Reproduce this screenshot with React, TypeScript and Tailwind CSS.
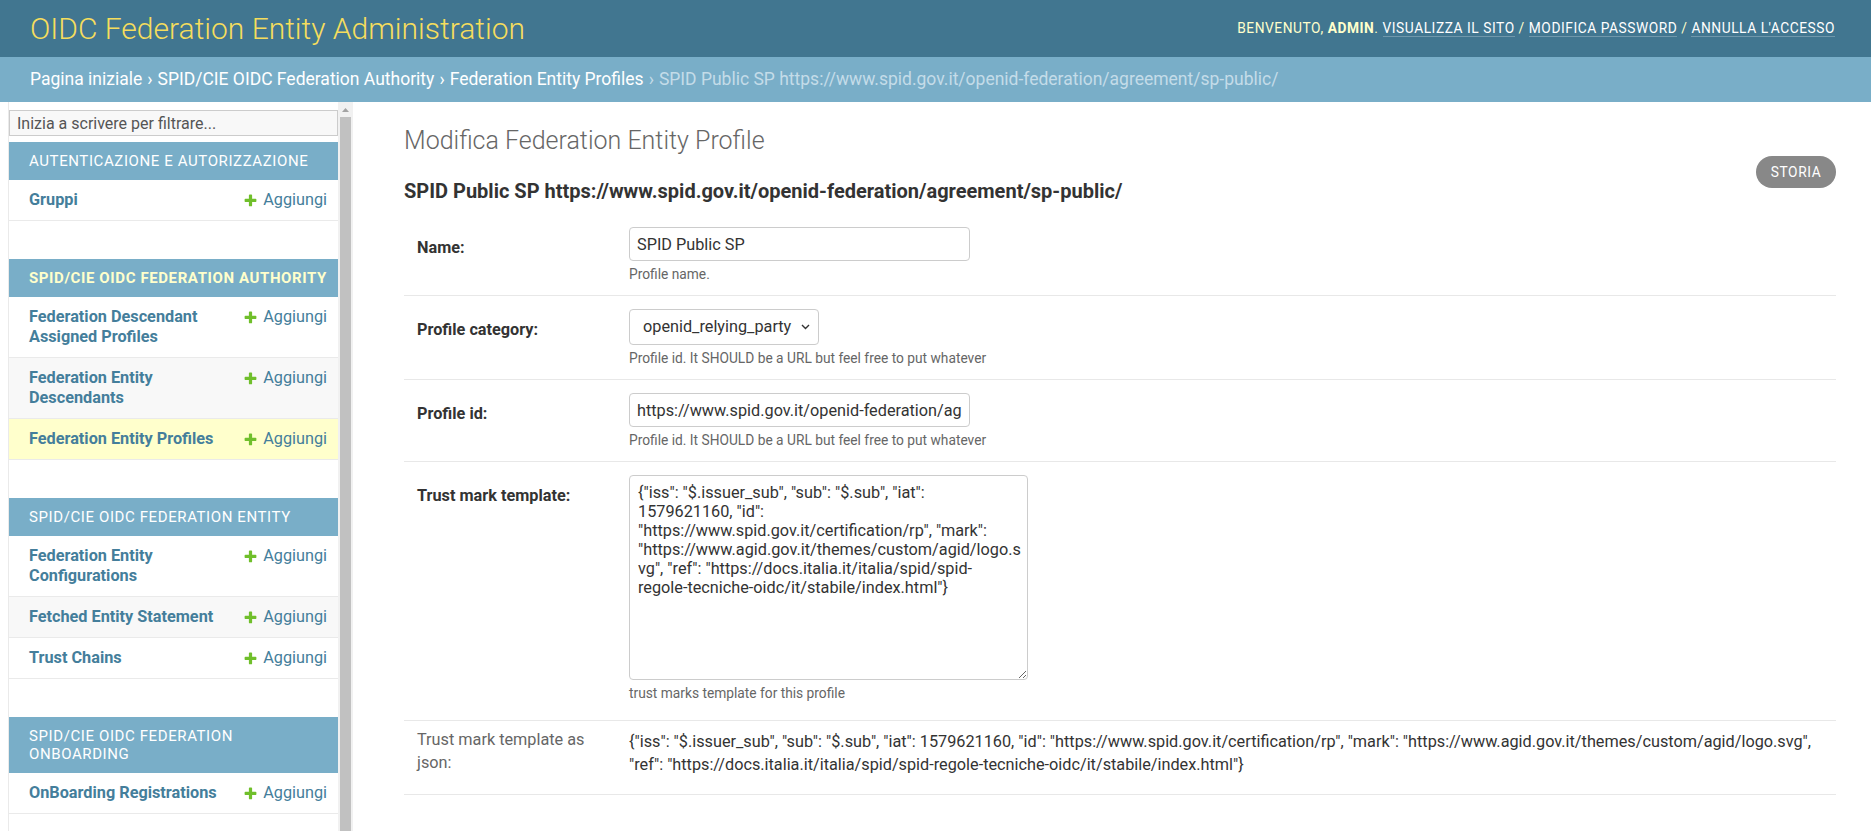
import React from "react"

const PlusIcon = () => (
  <svg width="15" height="15" viewBox="0 0 1792 1792" className="shrink-0">
    <path
      fill="#70bf2b"
      d="M1600 796v192q0 40-28 68t-68 28h-416v416q0 40-28 68t-68 28h-192q-40 0-68-28t-28-68v-416h-416q-40 0-68-28t-28-68v-192q0-40 28-68t68-28h416v-416q0-40 28-68t68-28h192q40 0 68 28t28 68v416h416q40 0 68 28t28 68z"
    />
  </svg>
)

type Model = { label: React.ReactNode; alt?: boolean; current?: boolean }
type Module = { title: React.ReactNode; current?: boolean; models: Model[] }

const modules: Module[] = [
  { title: "Autenticazione e autorizzazione", models: [{ label: "Gruppi" }] },
  {
    title: "SPID/CIE OIDC Federation Authority",
    current: true,
    models: [
      { label: <>Federation Descendant<br />Assigned Profiles</> },
      { label: <>Federation Entity<br />Descendants</>, alt: true },
      { label: "Federation Entity Profiles", current: true },
    ],
  },
  {
    title: "SPID/CIE OIDC Federation Entity",
    models: [
      { label: <>Federation Entity<br />Configurations</> },
      { label: "Fetched Entity Statement", alt: true },
      { label: "Trust Chains" },
    ],
  },
  {
    title: <>SPID/CIE OIDC Federation<br />Onboarding</>,
    models: [{ label: "OnBoarding Registrations" }],
  },
]

const template =
  '{"iss": "$.issuer_sub", "sub": "$.sub", "iat": 1579621160, "id": "https://www.spid.gov.it/certification/rp", "mark": "https://www.agid.gov.it/themes/custom/agid/logo.svg", "ref": "https://docs.italia.it/italia/spid/spid-regole-tecniche-oidc/it/stabile/index.html"}'

// textarea content, broken where the field wraps it
const templateLines = [
  '{"iss": "$.issuer_sub", "sub": "$.sub", "iat":',
  '1579621160, "id":',
  '"https://www.spid.gov.it/certification/rp", "mark":',
  '"https://www.agid.gov.it/themes/custom/agid/logo.s',
  'vg", "ref": "https://docs.italia.it/italia/spid/spid-',
  'regole-tecniche-oidc/it/stabile/index.html"}',
].join("\n")

function Sidebar() {
  return (
    <aside className="flex h-[729px] w-[353px] shrink-0 overflow-hidden">
      <div className="w-[9px] shrink-0 border-r border-[#eaeaea]" />
      <nav className="w-[329px] shrink-0">
        <input
          type="search"
          placeholder="Inizia a scrivere per filtrare..."
          className="mt-[8px] h-[26px] w-full border border-[#ccc] bg-[#f8f8f8] px-[7px] text-[16px] text-[#333] placeholder:text-[#555] outline-none"
        />
        <div className="mt-[6px]">
          {modules.map((m, i) => (
            <div key={i} className="mb-[38px]">
              <div
                className={`bg-[#79aec8] py-[10px] pl-[20px] pr-[8px] text-[15px] uppercase leading-[18px] tracking-[0.6px] whitespace-nowrap ${
                  m.current ? "font-bold text-[#ffc]" : "text-white"
                }`}
              >
                {m.title}
              </div>
              {m.models.map((row, j) => (
                <div
                  key={j}
                  className={`flex items-start justify-between border-b border-[#eaeaea] py-[10px] pl-[20px] pr-[11px] text-[16.25px] leading-[20px] ${
                    row.current ? "bg-[#ffc]" : row.alt ? "bg-[#f8f8f8]" : "bg-white"
                  }`}
                >
                  <a className="font-bold text-[#447e9b]">{row.label}</a>
                  <a className="flex items-center gap-[5px] whitespace-nowrap text-[#447e9b]">
                    <PlusIcon />
                    Aggiungi
                  </a>
                </div>
              ))}
            </div>
          ))}
        </div>
      </nav>
      {/* scrollbar */}
      <div className="flex w-[15px] shrink-0 flex-col bg-[#f1f1f1]">
        <div className="flex h-[15px] items-center justify-center">
          <svg width="7" height="4" viewBox="0 0 7 4">
            <path d="M3.5 0L7 4H0z" fill="#a3a3a3" />
          </svg>
        </div>
        <div className="mx-[2px] flex-1 bg-[#c1c1c1]" />
      </div>
    </aside>
  )
}

function FormRow({ label, children, last }: { label: string; children: React.ReactNode; last?: boolean }) {
  return (
    <div className={`flex border-b border-[#e8e8e8] pl-[13px] pt-[13px] ${last ? "pb-[19px]" : "pb-[13px]"}`}>
      <label className="w-[212px] shrink-0 pt-[11px] text-[16.25px] font-bold leading-[20px] text-[#333]">
        {label}
      </label>
      <div>{children}</div>
    </div>
  )
}

const Help = ({ children }: { children: React.ReactNode }) => (
  <div className="mt-[5px] text-[13.75px] leading-[16px] text-[#666]">{children}</div>
)

export default function App() {
  return (
    <div className="h-screen overflow-hidden bg-white font-['Roboto','Lucida_Grande','DejaVu_Sans',sans-serif] text-[#333]">
      <header className="flex h-[57px] items-center justify-between bg-[#417690] pl-[30px] pr-[36px]">
        <h1 className="text-[30px] font-light text-[#f5dd5d]">OIDC Federation Entity Administration</h1>
        <div className="text-[13.75px] uppercase tracking-[0.55px] text-[#ffc]">
          Benvenuto, <strong>admin</strong>.{" "}
          <a className="border-b border-white/25 text-white">Visualizza il sito</a> /{" "}
          <a className="border-b border-white/25 text-white">Modifica password</a> /{" "}
          <a className="border-b border-white/25 text-white">Annulla l'accesso</a>
        </div>
      </header>

      <div className="flex h-[45px] items-center bg-[#79aec8] px-[30px] text-[17.5px] text-white">
        <a>Pagina iniziale</a>
        <span className="px-[5px]">›</span>
        <a>SPID/CIE OIDC Federation Authority</a>
        <span className="px-[5px]">›</span>
        <a>Federation Entity Profiles</a>
        <span className="px-[5px] text-[#c4dce8]">›</span>
        <span className="text-[#c4dce8]">SPID Public SP https://www.spid.gov.it/openid-federation/agreement/sp-public/</span>
      </div>

      <div className="flex">
        <Sidebar />
        <main className="min-w-0 flex-1 pl-[51px] pr-[35px] pt-[24px]">
          <h1 className="text-[25px] font-light leading-[29px] text-[#666]">Modifica Federation Entity Profile</h1>
          <div className="flex items-start justify-between">
            <h2 className="mt-[25px] text-[20px] font-bold leading-[23px] text-[#333]">
              SPID Public SP https://www.spid.gov.it/openid-federation/agreement/sp-public/
            </h2>
            <a className="mt-[1px] flex h-[32px] w-[80px] items-center justify-center rounded-full bg-[#888] text-[13.75px] uppercase tracking-[0.6px] text-white">
              Storia
            </a>
          </div>

          <div className="mt-[11px]">
            <FormRow label="Name:">
              <input
                defaultValue="SPID Public SP"
                className="h-[34px] w-[341px] rounded-[4px] border border-[#ccc] px-[7px] text-[16.25px] text-[#333] outline-none"
              />
              <Help>Profile name.</Help>
            </FormRow>

            <FormRow label="Profile category:">
              <div className="relative w-[190px]">
                <select
                  defaultValue="openid_relying_party"
                  className="h-[36px] w-[190px] appearance-none rounded-[4px] border border-[#ccc] bg-white pl-[13px] text-[16.25px] text-[#333] outline-none"
                >
                  <option value="openid_relying_party">openid_relying_party</option>
                  <option value="openid_provider">openid_provider</option>
                </select>
                <svg
                  width="9"
                  height="6"
                  viewBox="0 0 9 6"
                  className="pointer-events-none absolute right-[9px] top-[15px]"
                >
                  <path d="M1 1l3.5 3.5L8 1" fill="none" stroke="#333" strokeWidth="1.4" />
                </svg>
              </div>
              <Help>Profile id. It SHOULD be a URL but feel free to put whatever</Help>
            </FormRow>

            <FormRow label="Profile id:">
              <input
                defaultValue="https://www.spid.gov.it/openid-federation/agreement/sp-public/"
                className="h-[34px] w-[341px] rounded-[4px] border border-[#ccc] px-[7px] text-[16.25px] text-[#333] outline-none"
              />
              <Help>Profile id. It SHOULD be a URL but feel free to put whatever</Help>
            </FormRow>

            <FormRow label="Trust mark template:" last>
              <textarea
                defaultValue={templateLines}
                wrap="off"
                className="block h-[205px] w-[399px] overflow-hidden rounded-[4px] border border-[#ccc] pl-[8px] pr-[3px] pt-[7px] text-[16.25px] leading-[19px] text-[#333] outline-none"
              />
              <Help>trust marks template for this profile</Help>
            </FormRow>

            <div className="flex border-b border-[#e8e8e8] pb-[18px] pl-[13px] pt-[7px]">
              <div className="w-[212px] shrink-0 pr-[20px] text-[16.25px] leading-[23px] text-[#666]">
                Trust mark template as json:
              </div>
              <div className="flex-1 pt-[2px] text-[16.25px] leading-[23px] text-[#333]">{template}</div>
            </div>
          </div>
        </main>
      </div>
    </div>
  )
}
